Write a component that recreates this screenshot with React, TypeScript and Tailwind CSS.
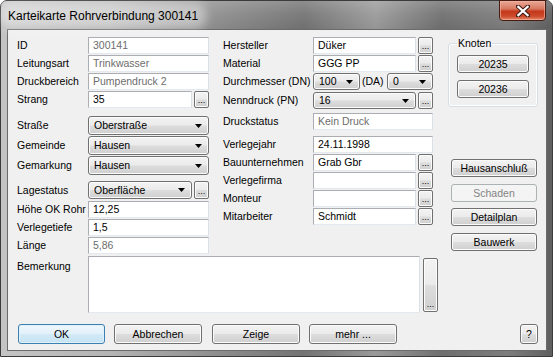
import type { ReactNode } from "react";

/* Karteikarte Rohrverbindung — Win7-Dialog, Aero-Rahmen */

const btnBg =
  "bg-[linear-gradient(#f3f3f3_0%,#ebebeb_48%,#dddddd_52%,#cfcfcf_100%)] border border-[#707070] shadow-[inset_0_0_0_1px_#fcfcfc]";

function Label({ children, className = "" }: { children: ReactNode; className?: string }) {
  return <div className={`shrink-0 whitespace-nowrap leading-none ${className}`}>{children}</div>;
}

function Box({ value = "", ro = false, className = "" }: { value?: string; ro?: boolean; className?: string }) {
  return (
    <div
      className={`h-full bg-white border border-[#abadb3] border-r-[#dbdfe6] border-b-[#e3e9ef] pl-[4px] flex items-center leading-none ${
        ro ? "text-[#6d6d6d]" : "text-black"
      } ${className}`}
    >
      {value}
    </div>
  );
}

function Dots({ className = "h-full" }: { className?: string }) {
  return (
    <div
      className={`w-[15px] shrink-0 rounded-[2px] flex items-end justify-center text-[9px] leading-[9px] pb-[2px] ${btnBg} ${className}`}
    >
      ...
    </div>
  );
}

function Tri() {
  return (
    <svg width="7" height="4" viewBox="0 0 7 4" className="shrink-0">
      <polygon points="0,0 7,0 3.5,4" fill="#000" />
    </svg>
  );
}

function Combo({ value, className = "" }: { value: string; className?: string }) {
  return (
    <div className={`h-full rounded-[3px] flex items-center justify-between pl-[5px] pr-[6px] leading-none ${btnBg} ${className}`}>
      <span>{value}</span>
      <Tri />
    </div>
  );
}

function Btn({
  children,
  className = "",
  disabled = false,
  def = false,
}: {
  children: ReactNode;
  className?: string;
  disabled?: boolean;
  def?: boolean;
}) {
  const look = disabled
    ? "bg-[#f4f4f4] border border-[#adb2b5] text-[#838383]"
    : def
      ? "bg-[linear-gradient(#eef7fd_0%,#e3f1fa_48%,#d3eaf7_52%,#c6e3f4_100%)] border border-[#3c7fb1] shadow-[inset_0_0_0_1px_#dff2fc] text-black"
      : `${btnBg} text-black`;
  return (
    <div className={`rounded-[3px] flex items-center justify-center leading-none ${look} ${className}`}>{children}</div>
  );
}

function CloseGlyph() {
  return (
    <svg width="14" height="12" viewBox="0 0 14 12">
      <path d="M2 1.5 L12 10.5 M12 1.5 L2 10.5" stroke="#3a1a14" strokeWidth="4.2" strokeLinecap="square" />
      <path d="M2.3 1.8 L11.7 10.2 M11.7 1.8 L2.3 10.2" stroke="#ffffff" strokeWidth="2.2" strokeLinecap="square" />
    </svg>
  );
}

export default function App() {
  return (
    <div className="w-[553px] h-[357px] overflow-hidden bg-white">
      <div className="w-[553px] h-[357px] rounded-t-[7px] border border-[#3b3b3b] bg-[linear-gradient(90deg,#c4c4c4_0%,#b4b4b4_20%,#8c8c8c_40%,#737373_55%,#9a9a9a_68%,#6f6f6f_80%,#7d7d7d_92%,#5f5f5f_100%)] flex flex-col font-['Liberation_Sans',Arial,sans-serif] text-[10.5px] text-black">
        {/* Titelleiste */}
        <div className="h-[28px] shrink-0 flex items-start justify-between bg-[linear-gradient(#ffffff30_0%,#ffffff10_45%,#00000008_100%)]">
          <div className="relative ml-[7px] mt-[8px]">
            <div className="absolute -inset-x-[8px] -inset-y-[6px] rounded-[10px] bg-[#ffffff66] blur-[5px]" />
            <div className="relative text-[12px] leading-[14px] text-black">Karteikarte Rohrverbindung 300141</div>
          </div>
          <div className="mr-[6px] -mt-[1px] w-[47px] h-[21px] rounded-b-[4px] border border-[#4a1b12] bg-[linear-gradient(#e9a897_0%,#d87a62_40%,#c4391c_55%,#cc4a2c_80%,#e48a68_100%)] shadow-[inset_0_0_0_1px_#f0b4a2aa] flex items-center justify-center">
            <CloseGlyph />
          </div>
        </div>

        {/* Client-Bereich */}
        <div className="ml-[6px] w-[540px] h-[322px] border border-[#6b6b6b] bg-[#f0f0f0] flex flex-col">
          <div className="flex items-start pt-[7px]">
            {/* linke Spalte */}
            <div className="ml-[9px] w-[192px] flex flex-col">
              <div className="h-[17px] flex items-center">
                <Label className="w-[71px]">ID</Label>
                <Box value="300141" ro className="w-[121px]" />
              </div>
              <div className="h-[17px] mt-[1px] flex items-center">
                <Label className="w-[71px]">Leitungsart</Label>
                <Box value="Trinkwasser" ro className="w-[121px]" />
              </div>
              <div className="h-[17px] mt-[1px] flex items-center">
                <Label className="w-[71px]">Druckbereich</Label>
                <Box value="Pumpendruck 2" ro className="w-[121px]" />
              </div>
              <div className="h-[17px] mt-[1px] flex items-center">
                <Label className="w-[71px]">Strang</Label>
                <Box value="35" className="w-[104px]" />
                <div className="ml-[2px] h-full flex">
                  <Dots />
                </div>
              </div>
              <div className="h-[19px] mt-[8px] flex items-center">
                <Label className="w-[71px]">Straße</Label>
                <Combo value="Oberstraße" className="w-[121px]" />
              </div>
              <div className="h-[19px] mt-[1px] flex items-center">
                <Label className="w-[71px]">Gemeinde</Label>
                <Combo value="Hausen" className="w-[121px]" />
              </div>
              <div className="h-[19px] mt-[1px] flex items-center">
                <Label className="w-[71px]">Gemarkung</Label>
                <Combo value="Hausen" className="w-[121px]" />
              </div>
              <div className="h-[18px] mt-[6px] flex items-center">
                <Label className="w-[71px]">Lagestatus</Label>
                <Combo value="Oberfläche" className="w-[104px]" />
                <div className="ml-[2px] h-full flex">
                  <Dots />
                </div>
              </div>
              <div className="h-[17px] mt-[2px] flex items-center">
                <Label className="w-[71px]">Höhe OK Rohr</Label>
                <Box value="12,25" className="w-[121px]" />
              </div>
              <div className="h-[17px] mt-[1px] flex items-center">
                <Label className="w-[71px]">Verlegetiefe</Label>
                <Box value="1,5" className="w-[121px]" />
              </div>
              <div className="h-[17px] mt-[1px] flex items-center">
                <Label className="w-[71px]">Länge</Label>
                <Box value="5,86" ro className="w-[121px]" />
              </div>
            </div>

            {/* mittlere Spalte */}
            <div className="ml-[14px] w-[210px] flex flex-col">
              <div className="h-[17px] flex items-center">
                <Label className="w-[90px]">Hersteller</Label>
                <Box value="Düker" className="w-[103px]" />
                <div className="ml-[2px] h-full flex">
                  <Dots />
                </div>
              </div>
              <div className="h-[17px] mt-[1px] flex items-center">
                <Label className="w-[90px]">Material</Label>
                <Box value="GGG PP" className="w-[103px]" />
                <div className="ml-[2px] h-full flex">
                  <Dots />
                </div>
              </div>
              <div className="h-[17px] mt-[1px] flex items-center">
                <Label className="w-[90px]">Durchmesser (DN)</Label>
                <Combo value="100" className="w-[47px]" />
                <Label className="w-[27px] pl-[2px]">(DA)</Label>
                <Combo value="0" className="w-[46px]" />
              </div>
              <div className="h-[17px] mt-[2px] flex items-center">
                <Label className="w-[90px]">Nenndruck (PN)</Label>
                <Combo value="16" className="w-[103px]" />
                <div className="ml-[2px] h-full flex">
                  <Dots />
                </div>
              </div>
              <div className="h-[17px] mt-[4px] flex items-center">
                <Label className="w-[90px]">Druckstatus</Label>
                <Box value="Kein Druck" ro className="w-[120px]" />
              </div>
              <div className="h-[17px] mt-[6px] flex items-center">
                <Label className="w-[90px]">Verlegejahr</Label>
                <Box value="24.11.1998" className="w-[120px]" />
              </div>
              <div className="h-[17px] mt-[1px] flex items-center">
                <Label className="w-[90px]">Bauunternehmen</Label>
                <Box value="Grab Gbr" className="w-[103px]" />
                <div className="ml-[2px] h-full flex">
                  <Dots />
                </div>
              </div>
              <div className="h-[17px] mt-[1px] flex items-center">
                <Label className="w-[90px]">Verlegefirma</Label>
                <Box className="w-[103px]" />
                <div className="ml-[2px] h-full flex">
                  <Dots />
                </div>
              </div>
              <div className="h-[17px] mt-[1px] flex items-center">
                <Label className="w-[90px]">Monteur</Label>
                <Box className="w-[103px]" />
                <div className="ml-[2px] h-full flex">
                  <Dots />
                </div>
              </div>
              <div className="h-[17px] mt-[1px] flex items-center">
                <Label className="w-[90px]">Mitarbeiter</Label>
                <Box value="Schmidt" className="w-[103px]" />
                <div className="ml-[2px] h-full flex">
                  <Dots />
                </div>
              </div>
            </div>

            {/* rechte Spalte */}
            <div className="ml-[15px] w-[90px] flex flex-col">
              <fieldset className="h-[70px] border border-[#d5dfe5] rounded-[3px] shadow-[inset_0_0_0_1px_#ffffff] px-[8px]">
                <legend className="px-[1px] leading-[13px]">Knoten</legend>
                <Btn className="mt-[5px] w-[72px] h-[18px]">20235</Btn>
                <Btn className="mt-[7px] w-[72px] h-[18px]">20236</Btn>
              </fieldset>
              <Btn className="mt-[52px] ml-[3px] w-[86px] h-[18px]">Hausanschluß</Btn>
              <Btn disabled className="mt-[7px] ml-[3px] w-[86px] h-[18px]">
                Schaden
              </Btn>
              <Btn className="mt-[6px] ml-[3px] w-[86px] h-[18px]">Detailplan</Btn>
              <Btn className="mt-[7px] ml-[3px] w-[86px] h-[18px]">Bauwerk</Btn>
            </div>
          </div>

          {/* Bemerkung */}
          <div className="mt-[2px] ml-[9px] flex items-start h-[57px]">
            <Label className="w-[71px] pt-[5px]">Bemerkung</Label>
            <Box className="w-[332px] h-[57px]" />
            <div className="ml-[3px] mt-[2px] h-[54px] flex">
              <Dots />
            </div>
          </div>

          {/* Schaltflächen */}
          <div className="mt-[11px] ml-[10px] flex items-center h-[20px]">
            <Btn def className="w-[87px] h-[20px]">OK</Btn>
            <Btn className="ml-[9px] w-[88px] h-[20px]">Abbrechen</Btn>
            <Btn className="ml-[10px] w-[88px] h-[20px]">Zeige</Btn>
            <Btn className="ml-[9px] w-[88px] h-[20px]">mehr ...</Btn>
            <Btn className="ml-[123px] w-[18px] h-[20px]">?</Btn>
          </div>
        </div>
      </div>
    </div>
  );
}
